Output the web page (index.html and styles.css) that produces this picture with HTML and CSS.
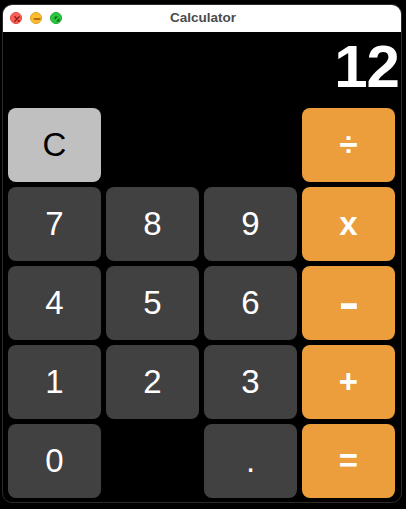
FILE: index.html
```html
<!DOCTYPE html>
<html>
<head>
<meta charset="utf-8">
<link rel="stylesheet" href="styles.css">
</head>
<body>
<div class="window">
  <div class="titlebar">
    <div class="lights">
      <span class="light red"><svg viewBox="0 0 12 12"><path d="M3.8 3.8 L8.2 8.2 M8.2 3.8 L3.8 8.2" stroke="#8c1a12" stroke-width="1.3" stroke-linecap="round"/></svg></span>
      <span class="light yellow"><svg viewBox="0 0 12 12"><path d="M3.2 6 H8.8" stroke="#985712" stroke-width="1.5" stroke-linecap="round"/></svg></span>
      <span class="light green"><svg viewBox="0 0 12 12"><path d="M3.6 3.6 H7 L3.6 7 Z M8.4 8.4 H5 L8.4 5 Z" fill="#0b650d"/></svg></span>
    </div>
    <div class="title">Calculator</div>
  </div>
  <div class="content">
    <div class="display">12</div>
    <div class="keys">
      <div class="key light-key">C</div>
      <div class="key empty"></div>
      <div class="key empty"></div>
      <div class="key op">÷</div>
      <div class="key">7</div>
      <div class="key">8</div>
      <div class="key">9</div>
      <div class="key op">x</div>
      <div class="key">4</div>
      <div class="key">5</div>
      <div class="key">6</div>
      <div class="key op minus"><span class="wide">-</span></div>
      <div class="key">1</div>
      <div class="key">2</div>
      <div class="key">3</div>
      <div class="key op">+</div>
      <div class="key">0</div>
      <div class="key empty"></div>
      <div class="key">.</div>
      <div class="key op">=</div>
    </div>
  </div>
</div>
</body>
</html>
```

FILE: styles.css
```css
html, body {
  margin: 0;
  padding: 0;
  background: #000;
}
body {
  width: 406px;
  height: 509px;
  overflow: hidden;
  font-family: "Liberation Sans", Arial, sans-serif;
}
.window {
  margin: 4px 0 0 2px;
  width: 400px;
  height: 499px;
  box-sizing: border-box;
  border: 1px solid #2c2c2c;
  border-radius: 10px;
  overflow: hidden;
  background: #000;
  display: flex;
  flex-direction: column;
}
.titlebar {
  height: 27px;
  background: #fff;
  position: relative;
  display: flex;
  align-items: center;
  justify-content: center;
  flex: none;
}
.lights {
  position: absolute;
  left: 7px;
  top: 7px;
  display: flex;
  gap: 8px;
}
.light {
  width: 12px;
  height: 12px;
  border-radius: 50%;
  display: block;
  box-sizing: border-box;
}
.light svg { width: 12px; height: 12px; display: block; }
.red { background: #fe5f57; border: 0.5px solid #e0443e; }
.yellow { background: #febc2e; border: 0.5px solid #dea123; }
.green { background: #28c840; border: 0.5px solid #1aab29; }
.title {
  font-weight: bold;
  font-size: 13.5px;
  color: #4b4b4b;
  margin-left: 2px;
  margin-top: -2px;
}
.content {
  flex: 1;
  padding: 0 6px 0 5px;
  display: flex;
  flex-direction: column;
}
.display {
  height: 76px;
  color: #fff;
  font-weight: bold;
  font-size: 60px;
  text-align: right;
  line-height: 70px;
  margin-right: -4px;
  letter-spacing: -1px;
}
.keys {
  display: grid;
  grid-template-columns: repeat(4, 93px);
  grid-auto-rows: 74px;
  column-gap: 5px;
  row-gap: 5px;
}
.key {
  background: #414141;
  border-radius: 8px;
  color: #fff;
  font-size: 33px;
  display: flex;
  align-items: center;
  justify-content: center;
}
.key.empty { background: transparent; }
.key.light-key { background: #c0c0c0; color: #000; }
.key.op { background: #eb9e3b; font-weight: bold; }
.key.minus { font-size: 48px; padding-bottom: 2px; }
.wide { display: inline-block; transform: scaleX(1.3); }
```
